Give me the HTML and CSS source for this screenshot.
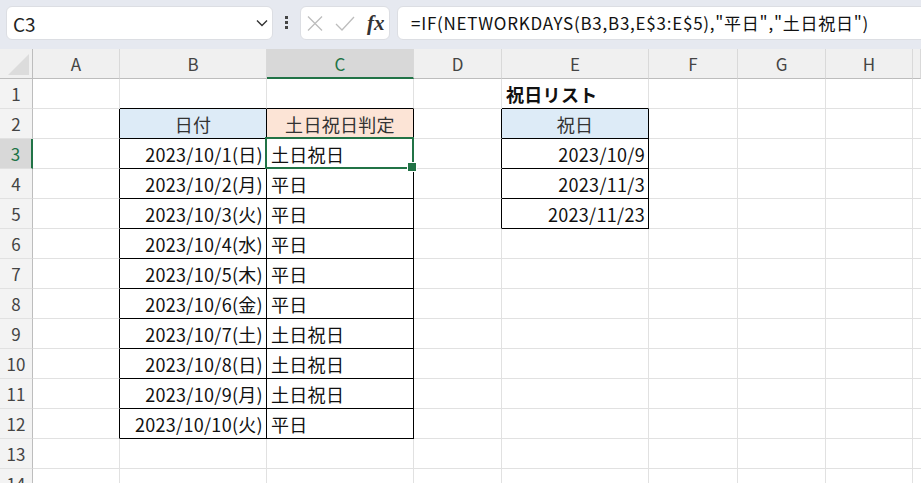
FILE: index.html
```html
<!DOCTYPE html>
<html lang="ja">
<head>
    <meta charset="UTF-8">
    <meta name="viewport" content="width=device-width, initial-scale=1.0">
    <title>土日祝日判定</title>
    <link rel="stylesheet" href="styles.css">
</head>
<body>
    <div class="formula-bar">
        <div class="name-box">
            <span>C3</span>
            <svg class="chevron" width="12" height="8" viewBox="0 0 12 8"><path d="M1 1.5 L6 6.5 L11 1.5" fill="none" stroke="#333" stroke-width="1.4"/></svg>
        </div>
        <div class="dots"><i></i><i></i><i></i></div>
        <div class="fx-box">
            <svg width="16" height="15" viewBox="0 0 16 15"><path d="M1 0.5 L15 14.5 M15 0.5 L1 14.5" stroke="#bdbdbd" stroke-width="1.3"/></svg>
            <svg width="20" height="15" viewBox="0 0 20 15"><path d="M1 8 L7 14 L19 1" fill="none" stroke="#bdbdbd" stroke-width="1.3"/></svg>
            <span class="fx">fx</span>
        </div>
        <div class="formula">=IF(NETWORKDAYS(B3,B3,E$3:E$5),"平日","土日祝日")</div>
    </div>

    <div class="sheet">
        <div class="row head">
            <div class="rh corner"><span class="tri"></span></div>
            <div class="ch">A</div>
            <div class="ch">B</div>
            <div class="ch active">C</div>
            <div class="ch">D</div>
            <div class="ch">E</div>
            <div class="ch">F</div>
            <div class="ch">G</div>
            <div class="ch">H</div>
            <div class="ch"></div>
        </div>

        <div class="row">
            <div class="rh">1</div>
            <div class="c"></div>
            <div class="c bb"></div>
            <div class="c bb"></div>
            <div class="c"></div>
            <div class="c bb title">祝日リスト</div>
            <div class="c"></div><div class="c"></div><div class="c"></div><div class="c"></div>
        </div>

        <div class="row">
            <div class="rh">2</div>
            <div class="c br"></div>
            <div class="c box center blue">日付</div>
            <div class="c box center orange">土日祝日判定</div>
            <div class="c br"></div>
            <div class="c box center blue">祝日</div>
            <div class="c"></div><div class="c"></div><div class="c"></div><div class="c"></div>
        </div>

        <div class="row">
            <div class="rh active">3</div>
            <div class="c br"></div>
            <div class="c box right">2023/10/1(日)</div>
            <div class="c box sel">土日祝日</div>
            <div class="c br"></div>
            <div class="c box right">2023/10/9</div>
            <div class="c"></div><div class="c"></div><div class="c"></div><div class="c"></div>
        </div>

        <div class="row">
            <div class="rh">4</div>
            <div class="c br"></div>
            <div class="c box right">2023/10/2(月)</div>
            <div class="c box">平日</div>
            <div class="c br"></div>
            <div class="c box right">2023/11/3</div>
            <div class="c"></div><div class="c"></div><div class="c"></div><div class="c"></div>
        </div>

        <div class="row">
            <div class="rh">5</div>
            <div class="c br"></div>
            <div class="c box right">2023/10/3(火)</div>
            <div class="c box">平日</div>
            <div class="c br"></div>
            <div class="c box right">2023/11/23</div>
            <div class="c"></div><div class="c"></div><div class="c"></div><div class="c"></div>
        </div>

        <div class="row">
            <div class="rh">6</div>
            <div class="c br"></div>
            <div class="c box right">2023/10/4(水)</div>
            <div class="c box">平日</div>
            <div class="c"></div><div class="c"></div>
            <div class="c"></div><div class="c"></div><div class="c"></div><div class="c"></div>
        </div>

        <div class="row">
            <div class="rh">7</div>
            <div class="c br"></div>
            <div class="c box right">2023/10/5(木)</div>
            <div class="c box">平日</div>
            <div class="c"></div><div class="c"></div>
            <div class="c"></div><div class="c"></div><div class="c"></div><div class="c"></div>
        </div>

        <div class="row">
            <div class="rh">8</div>
            <div class="c br"></div>
            <div class="c box right">2023/10/6(金)</div>
            <div class="c box">平日</div>
            <div class="c"></div><div class="c"></div>
            <div class="c"></div><div class="c"></div><div class="c"></div><div class="c"></div>
        </div>

        <div class="row">
            <div class="rh">9</div>
            <div class="c br"></div>
            <div class="c box right">2023/10/7(土)</div>
            <div class="c box">土日祝日</div>
            <div class="c"></div><div class="c"></div>
            <div class="c"></div><div class="c"></div><div class="c"></div><div class="c"></div>
        </div>

        <div class="row">
            <div class="rh">10</div>
            <div class="c br"></div>
            <div class="c box right">2023/10/8(日)</div>
            <div class="c box">土日祝日</div>
            <div class="c"></div><div class="c"></div>
            <div class="c"></div><div class="c"></div><div class="c"></div><div class="c"></div>
        </div>

        <div class="row">
            <div class="rh">11</div>
            <div class="c br"></div>
            <div class="c box right">2023/10/9(月)</div>
            <div class="c box">土日祝日</div>
            <div class="c"></div><div class="c"></div>
            <div class="c"></div><div class="c"></div><div class="c"></div><div class="c"></div>
        </div>

        <div class="row">
            <div class="rh">12</div>
            <div class="c br"></div>
            <div class="c box right">2023/10/10(火)</div>
            <div class="c box">平日</div>
            <div class="c"></div><div class="c"></div>
            <div class="c"></div><div class="c"></div><div class="c"></div><div class="c"></div>
        </div>

        <div class="row">
            <div class="rh">13</div>
            <div class="c"></div><div class="c"></div><div class="c"></div><div class="c"></div><div class="c"></div>
            <div class="c"></div><div class="c"></div><div class="c"></div><div class="c"></div>
        </div>

        <div class="row">
            <div class="rh">14</div>
            <div class="c"></div><div class="c"></div><div class="c"></div><div class="c"></div><div class="c"></div>
            <div class="c"></div><div class="c"></div><div class="c"></div><div class="c"></div>
        </div>
    </div>
</body>
</html>
```

FILE: styles.css
```css
* {
    box-sizing: border-box;
}

body {
    margin: 0;
    width: 921px;
    height: 483px;
    overflow: hidden;
    background: #ffffff;
    font-family: "Noto Sans CJK JP", "Noto Sans", sans-serif;
    color: #111;
}

/* formula bar */
.formula-bar {
    display: flex;
    align-items: flex-start;
    height: 49px;
    padding-top: 6px;
    background: #e6e9f0;
    overflow: hidden;
}

.name-box,
.fx-box,
.formula {
    height: 34px;
    background: #fff;
    border: 1px solid #dcdee3;
    border-radius: 6px;
}

.name-box {
    display: flex;
    align-items: center;
    justify-content: space-between;
    width: 267px;
    margin-left: 6px;
    padding: 0 4px 0 6px;
    font-size: 19px;
    color: #222;
}

.dots {
    display: flex;
    flex-direction: column;
    align-items: center;
    gap: 2px;
    width: 27px;
    padding-top: 10px;
}

.dots i {
    width: 3px;
    height: 3px;
    background: #444;
}

.fx-box {
    display: flex;
    align-items: center;
    width: 90px;
    padding-left: 6px;
    gap: 12px;
}

.fx {
    font-family: "Liberation Serif", serif;
    font-style: italic;
    font-weight: bold;
    font-size: 21px;
    color: #333;
}

.formula {
    flex: 1;
    margin-left: 7px;
    margin-right: -20px;
    padding-left: 13px;
    line-height: 32px;
    font-size: 17px;
    letter-spacing: 0.75px;
    color: #111;
    white-space: nowrap;
}

/* grid */
.row {
    display: grid;
    grid-template-columns: 33px 87px 147px 147px 88px 147px 89px 88px 87px 1fr;
    height: 30px;
}

.rh,
.ch {
    display: flex;
    align-items: center;
    justify-content: center;
    background: #f3f3f3;
    color: #444;
    font-size: 17px;
}

.rh {
    border-right: 1px solid #bdbdbd;
    border-bottom: 1px solid #e1e1e1;
}

.ch {
    border-right: 1px solid #d9d9d9;
    border-bottom: 1px solid #bdbdbd;
    background: #f0f0f0;
}

.corner {
    position: relative;
    border-bottom: 1px solid #bdbdbd;
    background: #f0f0f0;
}

.tri {
    position: absolute;
    right: 3px;
    bottom: 3px;
    width: 0;
    height: 0;
    border-left: 21px solid transparent;
    border-bottom: 21px solid #dcdcdc;
}

.ch.active {
    background: #d8d8d8;
    color: #217346;
    border-bottom: 2px solid #217346;
}

.rh.active {
    background: #d8d8d8;
    color: #217346;
    border-right: 2px solid #217346;
}

.c {
    position: relative;
    display: flex;
    align-items: center;
    padding: 0 4px;
    font-size: 18px;
    letter-spacing: 0.3px;
    white-space: nowrap;
    border-right: 1px solid #e1e1e1;
    border-bottom: 1px solid #e1e1e1;
}

.box {
    border-right-color: #000;
    border-bottom-color: #000;
}

.br {
    border-right-color: #000;
}

.bb {
    border-bottom-color: #000;
}

.right {
    justify-content: flex-end;
    padding-right: 3px;
}

.center {
    justify-content: center;
    color: #333;
}

.blue {
    background: #ddebf7;
}

.orange {
    background: #fce4d6;
}

.title {
    font-weight: bold;
    overflow: visible;
}

/* active cell */
.sel::after {
    content: '';
    position: absolute;
    left: -2px;
    top: -2px;
    right: -1px;
    bottom: -1px;
    border: 2px solid #217346;
}

.sel::before {
    content: '';
    position: absolute;
    right: -4px;
    bottom: -4px;
    width: 8px;
    height: 8px;
    background: #217346;
    border: 1px solid #fff;
    z-index: 1;
}
```
